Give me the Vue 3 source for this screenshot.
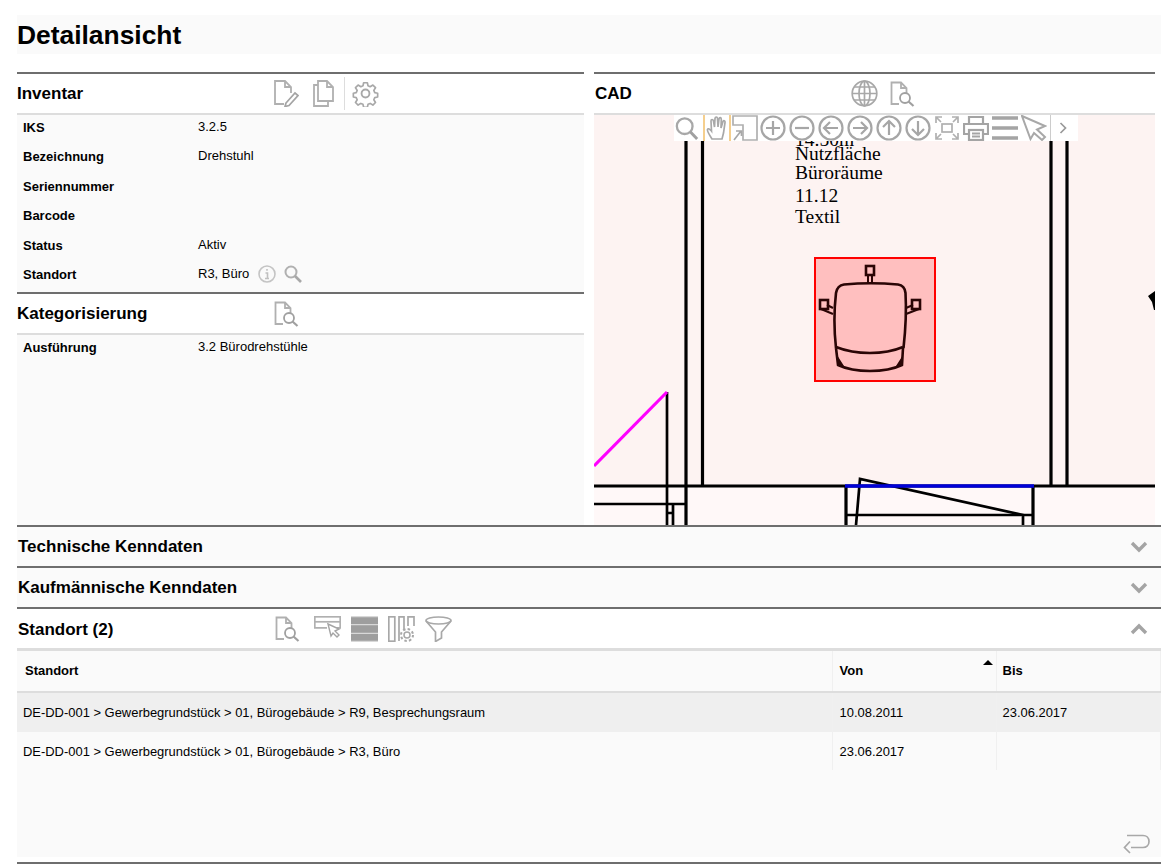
<script setup>
const rows = [
  ['IKS', '3.2.5'],
  ['Bezeichnung', 'Drehstuhl'],
  ['Seriennummer', ''],
  ['Barcode', ''],
  ['Status', 'Aktiv'],
]
const locations = [
  ['DE-DD-001 > Gewerbegrundstück > 01, Bürogebäude > R9, Besprechungsraum', '10.08.2011', '23.06.2017'],
  ['DE-DD-001 > Gewerbegrundstück > 01, Bürogebäude > R3, Büro', '23.06.2017', ''],
]
const circleIcons = [
  'M13 6v14M6 13h14',
  'M6 13h14',
  'M20 13H6M12 7l-6 6 6 6',
  'M6 13h14M14 7l6 6-6 6',
  'M13 20V6M7 12l6-6 6 6',
  'M13 6v14M7 14l6 6 6-6',
]
</script>

<template>
  <div class="page">
    <svg class="sprite" aria-hidden="true">
      <symbol id="docsearch" viewBox="0 0 25 26">
        <path d="M9 23H1.500V1.500H11L16.500 7V12M11 1.500V7H16.500" fill="none" stroke="#b0b0b0" stroke-width="1.800"/>
        <circle cx="15" cy="17" r="5" fill="#fff" stroke="#a0a0a0" stroke-width="1.800"/>
        <path d="M18.500 20.500L23.500 25" stroke="#a0a0a0" stroke-width="2.200"/>
      </symbol>
      <symbol id="chevdown" viewBox="0 0 18 12">
        <path d="M2 2l7 7 7-7" fill="none" stroke="#a4a4a4" stroke-width="3.400"/>
      </symbol>
    </svg>

    <h1 class="title">Detailansicht</h1>

    <div class="panels">
      <div class="left">
        <section class="panel">
          <header class="bar">
            <h2 class="bar-title">Inventar</h2>
            <svg class="ic" width="25" height="27" viewBox="0 0 25 27">
              <path d="M10 24H1V1H11L17 7V13M11 1V7H17" fill="none" stroke="#b0b0b0" stroke-width="1.800"/>
              <path d="M12 23l9-10 3 2.500-9 10-4 1z" fill="#fff" stroke="#a4a4a4" stroke-width="1.700"/>
            </svg>
            <svg class="ic ic-copy" width="21" height="27" viewBox="0 0 21 27">
              <path d="M5 1H14L20 7V21H5zM14 1V7H20M5 5H1V26H15V21" fill="none" stroke="#b0b0b0" stroke-width="1.800"/>
            </svg>
            <span class="vsep"></span>
            <svg class="ic ic-gear" width="27" height="27" viewBox="0 0 26 26">
              <path d="M11 1.500h4l.7 3.300 2.300 1 2.900-1.800 2.800 2.800-1.800 2.900 1 2.300 3.100.7v4l-3.100.7-1 2.300 1.800 2.900-2.800 2.800-2.900-1.800-2.300 1-.7 3.100h-4l-.7-3.100-2.300-1-2.900 1.800-2.800-2.800 1.800-2.900-1-2.300-3.100-.7v-4l3.100-.7 1-2.300-1.800-2.900 2.800-2.800 2.900 1.800 2.300-1z" transform="translate(1.300 1.300) scale(.9)" fill="none" stroke="#a8a8a8" stroke-width="1.800" stroke-linejoin="round"/>
              <circle cx="13" cy="13" r="3.800" fill="none" stroke="#a8a8a8" stroke-width="1.800"/>
            </svg>
          </header>
          <div class="fields">
            <div v-for="r in rows" :key="r[0]" class="field">
              <span class="label">{{ r[0] }}</span>
              <span class="value">{{ r[1] }}</span>
            </div>
            <div class="field">
              <span class="label">Standort</span>
              <span class="value value-icons">
                R3, Büro
                <svg class="ic-info" width="18" height="18" viewBox="0 0 18 18">
                  <circle cx="9" cy="9" r="8" fill="none" stroke="#c4c4c4" stroke-width="1.600"/>
                  <path d="M9 4v1.800M7.500 8H9.500V13M7 13.500H11" fill="none" stroke="#c0c0c0" stroke-width="1.600"/>
                </svg>
                <svg class="ic-find" width="18" height="18" viewBox="0 0 18 18">
                  <circle cx="7" cy="7" r="5.500" fill="none" stroke="#b0b0b0" stroke-width="2"/>
                  <path d="M11 11l6 6" stroke="#a8a8a8" stroke-width="2.700"/>
                </svg>
              </span>
            </div>
          </div>
        </section>
        <section class="panel panel-grow">
          <header class="bar">
            <h2 class="bar-title">Kategorisierung</h2>
            <svg class="ic" width="25" height="26"><use href="#docsearch"/></svg>
          </header>
          <div class="fields fields-grow">
            <div class="field">
              <span class="label">Ausführung</span>
              <span class="value">3.2 Bürodrehstühle</span>
            </div>
          </div>
        </section>
      </div>

      <section class="panel right">
        <header class="bar">
          <h2 class="bar-title bar-title-cad">CAD</h2>
          <svg class="ic" width="27" height="27" viewBox="0 0 27 27">
            <g fill="none" stroke="#a8a8a8" stroke-width="1.700">
              <circle cx="13.500" cy="13.500" r="12.300"/>
              <ellipse cx="13.500" cy="13.500" rx="5.500" ry="12.300"/>
              <path d="M13.500 1v25M1.300 13.500h24.400M3 7h21M3 20h21"/>
            </g>
          </svg>
          <svg class="ic ic-cadsearch" width="25" height="26"><use href="#docsearch"/></svg>
        </header>
        <div class="cad">
          <svg class="drawing" width="561" height="410" viewBox="594 115 561 410">
            <rect x="594" y="487" width="561" height="38" fill="#fff8f8"/>
            <g stroke="#000" fill="none">
              <path d="M686 115V525M702.500 115V486M1051 115V486M1067 115V486" stroke-width="3.200"/>
              <path d="M667 392V525" stroke-width="2.700"/>
              <path d="M594 486H1155" stroke-width="3.200"/>
              <path d="M594 504H687" stroke-width="2.700"/>
              <path d="M673 504V525M667 513H673" stroke-width="2.700"/>
              <path d="M846 486V525M1033 486V525" stroke-width="3.200"/>
              <path d="M846 515H1033" stroke-width="2.700"/>
              <path d="M856 525L860 479L1023 515V525" stroke-width="2.700"/>
              <path d="M1148 296L1155 291V310H1154L1152 302Z" fill="#000" stroke="none"/>
            </g>
            <path d="M594 466L667 392" stroke="#f0f" stroke-width="3.200" fill="none"/>
            <path d="M845 486H1034" stroke="#0000d8" stroke-width="3.500" fill="none"/>
            <rect x="815" y="258" width="120" height="123" fill="#ffbfbf" stroke="#f00" stroke-width="2"/>
            <g fill="none" stroke="#2a0505" stroke-width="2.600">
              <rect x="866" y="266" width="8" height="9"/>
              <path d="M868 275V284M872 275V284" stroke-width="2"/>
              <path d="M836 348C834 330 834 310 836 293C837 287 840 285 844 284.500C860 283 882 283 898 284.500C902 285 905 288 905.500 293C906.500 310 905.500 330 903.500 348"/>
              <path d="M836 347C856 355 884 355 903 347"/>
              <path d="M836 348L838 365C855 373 885 373 902 365L903 348"/>
              <rect x="820" y="300" width="8" height="9"/>
              <path d="M821 309L833 314M827 305L833 308" stroke-width="2"/>
              <rect x="912" y="300" width="8" height="9"/>
              <path d="M919 309L906 314M913 305L906 308" stroke-width="2"/>
            </g>
            <path d="M837 355L838 366L844 366ZM903 355L902 366L896 366Z" fill="#2a0505"/>
            <g class="cad-text">
              <text x="795" y="146">14.50m</text>
              <text x="795" y="160">Nutzfläche</text>
              <text x="795" y="179">Büroräume</text>
              <text x="795" y="202">11.12</text>
              <text x="795" y="223">Textil</text>
            </g>
          </svg>

          <div class="toolbar">
            <svg class="tb tb-first" width="24" height="26" viewBox="0 0 26 26">
              <circle cx="10.500" cy="11" r="8.500" fill="none" stroke="#a8a8a8" stroke-width="2.500"/>
              <path d="M16.500 17l7.500 8" stroke="#a0a0a0" stroke-width="3.200"/>
            </svg>
            <span class="tb-mark tb-mark-a"></span>
            <svg class="tb" width="22" height="26" viewBox="0 0 22 26">
              <path d="M6 24C4 21 1 16 1.500 14.500C2 13 4 14 5.500 16L5 6C5 4 7 4 7.500 6L8.500 12L9 3.500C9.300 1.500 11.300 1.500 11.500 3.500L12 12L13 4C13.400 2 15.300 2.300 15.300 4.500L15 13L17 6.500C17.500 5 19.300 5.500 19 7.500L17.500 18C17 20 16.500 22 16 24Z" fill="none" stroke="#a8a8a8" stroke-width="1.700"/>
            </svg>
            <span class="tb-mark"></span>
            <svg class="tb" width="26" height="26" viewBox="0 0 26 26">
              <path d="M1 10V1H25V25H11V10Z" fill="none" stroke="#b0b0b0" stroke-width="1.700"/>
              <path d="M2 25L9 16M4 16H9.500V21" fill="none" stroke="#a8a8a8" stroke-width="1.700"/>
            </svg>
            <span class="tb-gap"></span>
            <svg v-for="d in circleIcons" :key="d" class="tb tb-circle" width="26" height="26" viewBox="0 0 26 26">
              <circle cx="13" cy="13" r="11.500" fill="none" stroke="#a6a6a6" stroke-width="2.200"/>
              <path :d="d" fill="none" stroke="#a6a6a6" stroke-width="2.200"/>
            </svg>
            <svg class="tb tb-cell" width="26" height="26" viewBox="0 0 26 26">
              <g fill="none" stroke="#b0b0b0" stroke-width="1.700">
                <rect x="8" y="9" width="10" height="8"/>
                <path d="M2 8V2H8M2 2l5 5M24 8V2H18M24 2l-5 5M2 18V24H8M2 24l5-5M24 18V24H18M24 24l-5-5"/>
              </g>
            </svg>
            <svg class="tb tb-cell" width="26" height="26" viewBox="0 0 26 26">
              <g fill="none" stroke="#a4a4a4" stroke-width="2.200">
                <path d="M6 9V2H20V9"/>
                <path d="M6 19H1V9H25V19H20"/>
                <rect x="6" y="15" width="14" height="10"/>
                <path d="M9 18.500H17M9 21.500H17"/>
              </g>
            </svg>
            <svg class="tb tb-cell" width="26" height="26" viewBox="0 0 26 26">
              <path d="M0 3H26M0 13H26M0 23H26" stroke="#a4a4a4" stroke-width="3.500"/>
            </svg>
            <svg class="tb tb-cell" width="26" height="26" viewBox="0 0 26 26">
              <path d="M1 1L24 11L16 14.500L24 22L21 25L13 18L9.500 24Z" fill="none" stroke="#a8a8a8" stroke-width="2"/>
            </svg>
            <span class="tb-sep"></span>
            <svg class="tb tb-more" width="9" height="14" viewBox="0 0 9 14">
              <path d="M1.500 2l5 5-5 5" fill="none" stroke="#999" stroke-width="1.700"/>
            </svg>
          </div>
        </div>
      </section>
    </div>

    <header class="bar bar-sec bar-closed">
      <h2 class="bar-title sec-title">Technische Kenndaten</h2>
      <svg class="chev" width="18" height="12"><use href="#chevdown"/></svg>
    </header>
    <header class="bar bar-sec bar-closed">
      <h2 class="bar-title sec-title">Kaufmännische Kenndaten</h2>
      <svg class="chev" width="18" height="12"><use href="#chevdown"/></svg>
    </header>
    <header class="bar bar-sec">
      <h2 class="bar-title sec-title sec-title-fixed">Standort (2)</h2>
      <svg class="ic" width="25" height="26"><use href="#docsearch"/></svg>
      <svg class="ic ic-gap1" width="27" height="22" viewBox="0 0 27 22">
        <g fill="none" stroke="#b0b0b0" stroke-width="1.700">
          <rect x=".8" y=".8" width="25.400" height="5"/>
          <path d="M.8 5.800V11.800H13M26.200 5.800V11.800H22"/>
        </g>
        <path d="M14 8L25 13L21 15L25 19L23 21L19 17L17 20Z" fill="#fff" stroke="#a4a4a4" stroke-width="1.400"/>
      </svg>
      <svg class="ic ic-gap2" width="27" height="26" viewBox="0 0 27 26">
        <rect width="27" height="26" fill="#9e9e9e"/>
        <path d="M0 .6H27M0 8.700H27M0 17.300H27M0 25.400H27" stroke="#d8d8d8" stroke-width="1.300"/>
      </svg>
      <svg class="ic ic-gap3" width="27" height="26" viewBox="0 0 27 26">
        <g fill="none" stroke="#a8a8a8" stroke-width="1.700">
          <rect x=".8" y=".8" width="6" height="24.400"/>
          <path d="M11 25V.8H16V13M20 10V.8H26V10"/>
        </g>
        <circle cx="19" cy="19" r="3" fill="none" stroke="#a8a8a8" stroke-width="1.500"/>
        <circle cx="19" cy="19" r="6" fill="none" stroke="#a8a8a8" stroke-width="2" stroke-dasharray="2.500 2.200"/>
      </svg>
      <svg class="ic ic-gap4" width="27" height="26" viewBox="0 0 27 26">
        <ellipse cx="13.500" cy="4.500" rx="12.500" ry="3.500" fill="none" stroke="#a8a8a8" stroke-width="1.700"/>
        <path d="M1 5L10.500 16V25.500L16.500 22V16L26 5" fill="none" stroke="#a8a8a8" stroke-width="1.700"/>
      </svg>
      <svg class="chev chev-up" width="18" height="12"><use href="#chevdown"/></svg>
    </header>

    <div class="standort">
      <table class="grid">
        <thead>
          <tr>
            <th class="c1">Standort</th>
            <th class="c2 sorted">Von<i class="sort"></i></th>
            <th class="c3">Bis</th>
          </tr>
        </thead>
        <tbody>
          <tr v-for="l in locations" :key="l[0]">
            <td>{{ l[0] }}</td>
            <td class="td-von">{{ l[1] }}</td>
            <td>{{ l[2] }}</td>
          </tr>
        </tbody>
      </table>
      <div class="back">
        <svg width="27" height="20" viewBox="0 0 27 20">
          <path d="M8 13.500H20C23.500 13.500 26 11 26 7.500C26 4 23.500 1.500 20 1.500H4M7 7.500L1.500 13.500L7 19" fill="none" stroke="#a8a8a8" stroke-width="1.700"/>
        </svg>
      </div>
    </div>
    <div class="foot"></div>
  </div>
</template>

<style scoped>
.page {
  width: 1144px;
  margin-left: 17px;
  padding-top: 15px;
  font-family: "Liberation Sans", Arial, sans-serif;
  color: #000;
}
.sprite { position: absolute; width: 0; height: 0; }
.title {
  margin: 0 0 18px;
  height: 39px;
  line-height: 41px;
  background: #fafafa;
  font-size: 26.400px;
  font-weight: 700;
}
.panels { display: flex; gap: 10px; height: 453px; }
.left { width: 567px; display: flex; flex-direction: column; }
.right { width: 561px; }
.panel { display: flex; flex-direction: column; }
.panel-grow { flex: 1; }
.bar {
  display: flex;
  align-items: center;
  height: 39px;
  background: #fff;
  border-top: 2px solid #6e6e6e;
  border-bottom: 2px solid #ddd;
  flex: none;
}
.bar-title {
  width: 257px;
  margin: 0;
  font-size: 17px;
  font-weight: 700;
}
.bar-title-cad { width: 257px; padding-left: 1px; box-sizing: border-box; }
.ic { flex: none; display: block; }
.ic-copy { margin-left: 14px; }
.ic-gear { margin-left: 7px; }
.ic-cadsearch { margin-left: 12px; }
.vsep { width: 1px; height: 33px; background: #ddd; margin-left: 10px; }
.fields { background: #fafafa; }
.fields-grow { flex: 1; }
.field { display: flex; height: 29.500px; box-sizing: border-box; padding-top: 4.500px; line-height: 16px; font-size: 13px; }
.label { width: 181px; padding-left: 6px; box-sizing: border-box; font-weight: 700; font-size: 13px; flex: none; }
.value { font-size: 13px; margin-top: -1px; }
.value-icons { display: flex; align-items: center; height: 16px; }
.ic-info { margin-left: 9px; }
.ic-find { margin-left: 8px; }
.cad { position: relative; height: 410px; background: #fdf3f2; overflow: hidden; }
.drawing { display: block; }
.cad-text text { font-family: "Liberation Serif", "Times New Roman", serif; font-size: 19.500px; fill: #000; }
.toolbar {
  position: absolute;
  left: 80px;
  top: 0;
  width: 404px;
  height: 26px;
  display: flex;
  align-items: center;
  background: #fff;
}
.tb { flex: none; display: block; }
.tb-first { margin-left: 1px; }
.tb-mark { width: 2px; height: 26px; background: #f5cf8e; margin: 0 1px; flex: none; }
.tb-mark-a { margin-left: 4px; }
.tb-gap { width: 2px; flex: none; }
.tb-circle { margin-right: 3px; }
.tb-cell { margin-right: 3px; }
.tb-sep { width: 1px; height: 26px; background: #ccc; flex: none; }
.tb-more { margin-left: 8px; }
.bar-closed { background: #fafafa; border-bottom: 0; }
.bar-sec { position: relative; }
.bar-sec:not(.bar-closed) { border-bottom: 0; }
.sec-title { width: auto; padding-left: 1px; }
.sec-title-fixed { width: 258px; box-sizing: border-box; margin-top: 2px; }
.ic-gap1 { margin: 0 0 4px 14px; }
.ic-gap2 { margin-left: 10px; }
.ic-gap3 { margin-left: 10px; }
.ic-gap4 { margin-left: 10px; }
.chev { margin-left: auto; margin-right: 13px; flex: none; }
.chev-up { transform: rotate(180deg); }
.standort {
  position: relative;
  height: 206px;
  border-top: 3px solid #ddd;
  background: #fafafa;
}
.grid { width: 1143px; border-collapse: collapse; table-layout: fixed; font-size: 12.950px; }
.grid th {
  height: 41px;
  padding: 0 0 2px 8px;
  box-sizing: border-box;
  text-align: left;
  font-size: 13px;
  font-weight: 700;
  border-right: 1px solid #f0f0f0;
  border-bottom: 2px solid #ddd;
}
.c1 { width: 815px; }
.c2, .c3 { width: 164px; }
.c2 { padding-left: 7px !important; }
.c3 { padding-left: 6px !important; }
.sorted { position: relative; }
.sort {
  position: absolute;
  right: 3px;
  top: 9px;
  border-left: 5px solid transparent;
  border-right: 5px solid transparent;
  border-bottom: 5px solid #000;
}
.grid td {
  height: 38px;
  padding: 0 0 0 6px;
  border-right: 1px solid #f0f0f0;
  box-sizing: border-box;
}
.grid .td-von { padding-left: 7px; }
.grid tbody tr:first-child td { background: #efefef; height: 40px; }
.back { position: absolute; right: 11px; bottom: -1px; }
.foot { height: 5px; border-bottom: 2px solid #6e6e6e; background: #fff; }
</style>

<style>
html, body { background: #fff; overflow: hidden; }
</style>
